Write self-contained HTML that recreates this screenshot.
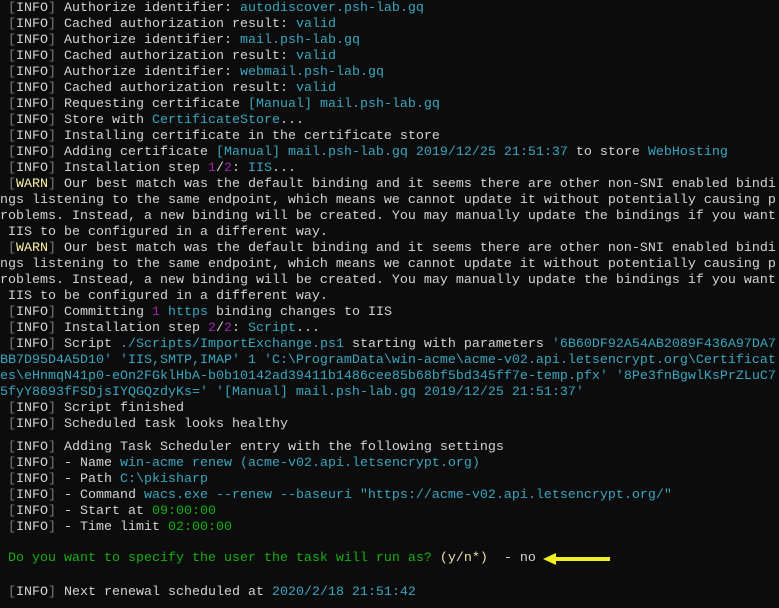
<!DOCTYPE html>
<html><head><meta charset="utf-8"><style>
html,body{margin:0;padding:0;background:#0c0c0c;width:779px;height:608px;overflow:hidden}
.b{position:absolute;left:0;font-family:"Liberation Mono",monospace;font-size:13.33px;line-height:16px;color:#d4d4d4;white-space:pre;width:779px;overflow:hidden}
.g{color:#767676}.c{color:#3aa6c0}.m{color:#a020a8}.y{color:#f9f1a5}.gr{color:#16b010}.yl{color:#e8e2a8}
</style></head><body>
<div class="b" style="top:1px"> <span class="g">[</span>INFO<span class="g">]</span> Authorize identifier: <span class="c">autodiscover.psh-lab.gq</span>
 <span class="g">[</span>INFO<span class="g">]</span> Cached authorization result: <span class="c">valid</span>
 <span class="g">[</span>INFO<span class="g">]</span> Authorize identifier: <span class="c">mail.psh-lab.gq</span>
 <span class="g">[</span>INFO<span class="g">]</span> Cached authorization result: <span class="c">valid</span>
 <span class="g">[</span>INFO<span class="g">]</span> Authorize identifier: <span class="c">webmail.psh-lab.gq</span>
 <span class="g">[</span>INFO<span class="g">]</span> Cached authorization result: <span class="c">valid</span>
 <span class="g">[</span>INFO<span class="g">]</span> Requesting certificate <span class="c">[Manual] mail.psh-lab.gq</span>
 <span class="g">[</span>INFO<span class="g">]</span> Store with <span class="c">CertificateStore</span>...
 <span class="g">[</span>INFO<span class="g">]</span> Installing certificate in the certificate store
 <span class="g">[</span>INFO<span class="g">]</span> Adding certificate <span class="c">[Manual] mail.psh-lab.gq 2019/12/25 21:51:37</span> to store <span class="c">WebHosting</span>
 <span class="g">[</span>INFO<span class="g">]</span> Installation step <span class="m">1</span>/<span class="m">2</span>: <span class="c">IIS</span>...
 <span class="g">[</span><span class="y">WARN</span><span class="g">]</span> Our best match was the default binding and it seems there are other non-SNI enabled bindi
ngs listening to the same endpoint, which means we cannot update it without potentially causing p
roblems. Instead, a new binding will be created. You may manually update the bindings if you want
 IIS to be configured in a different way.
 <span class="g">[</span><span class="y">WARN</span><span class="g">]</span> Our best match was the default binding and it seems there are other non-SNI enabled bindi
ngs listening to the same endpoint, which means we cannot update it without potentially causing p
roblems. Instead, a new binding will be created. You may manually update the bindings if you want
 IIS to be configured in a different way.
 <span class="g">[</span>INFO<span class="g">]</span> Committing <span class="m">1</span> <span class="c">https</span> binding changes to IIS
 <span class="g">[</span>INFO<span class="g">]</span> Installation step <span class="m">2</span>/<span class="m">2</span>: <span class="c">Script</span>...
 <span class="g">[</span>INFO<span class="g">]</span> Script <span class="c">./Scripts/ImportExchange.ps1</span> starting with parameters <span class="c">'6B60DF92A54AB2089F436A97DA7
BB7D95D4A5D10' 'IIS,SMTP,IMAP' 1 'C:\ProgramData\win-acme\acme-v02.api.letsencrypt.org\Certificat
es\eHnmqN41p0-eOn2FGklHbA-b0b10142ad39411b1486cee85b68bf5bd345ff7e-temp.pfx' '8Pe3fnBgwlKsPrZLuC7
5fyY8693fFSDjsIYQGQzdyKs=' '[Manual] mail.psh-lab.gq 2019/12/25 21:51:37'</span>
 <span class="g">[</span>INFO<span class="g">]</span> Script finished
 <span class="g">[</span>INFO<span class="g">]</span> Scheduled task looks healthy</div>
<div class="b" style="top:440px"> <span class="g">[</span>INFO<span class="g">]</span> Adding Task Scheduler entry with the following settings
 <span class="g">[</span>INFO<span class="g">]</span> - Name <span class="c">win-acme renew (acme-v02.api.letsencrypt.org)</span>
 <span class="g">[</span>INFO<span class="g">]</span> - Path <span class="c">C:\pkisharp</span>
 <span class="g">[</span>INFO<span class="g">]</span> - Command <span class="c">wacs.exe --renew --baseuri "https://acme-v02.api.letsencrypt.org/"</span>
 <span class="g">[</span>INFO<span class="g">]</span> - Start at <span class="gr">09:00:00</span>
 <span class="g">[</span>INFO<span class="g">]</span> - Time limit <span class="gr">02:00:00</span></div>
<div class="b" style="top:551px"> <span class="gr">Do you want to specify the user the task will run as?</span> <span class="yl">(y/n*)</span>  - no</div>
<div class="b" style="top:585px"> <span class="g">[</span>INFO<span class="g">]</span> Next renewal scheduled at <span class="c">2020/2/18 21:51:42</span></div>
<svg style="position:absolute;left:540px;top:551px" width="70" height="16"><line x1="12" y1="8" x2="70" y2="8" stroke="#f0f020" stroke-width="4"/><polygon points="3,8 16,2 16,14" fill="#f0f020"/></svg>
</body></html>
